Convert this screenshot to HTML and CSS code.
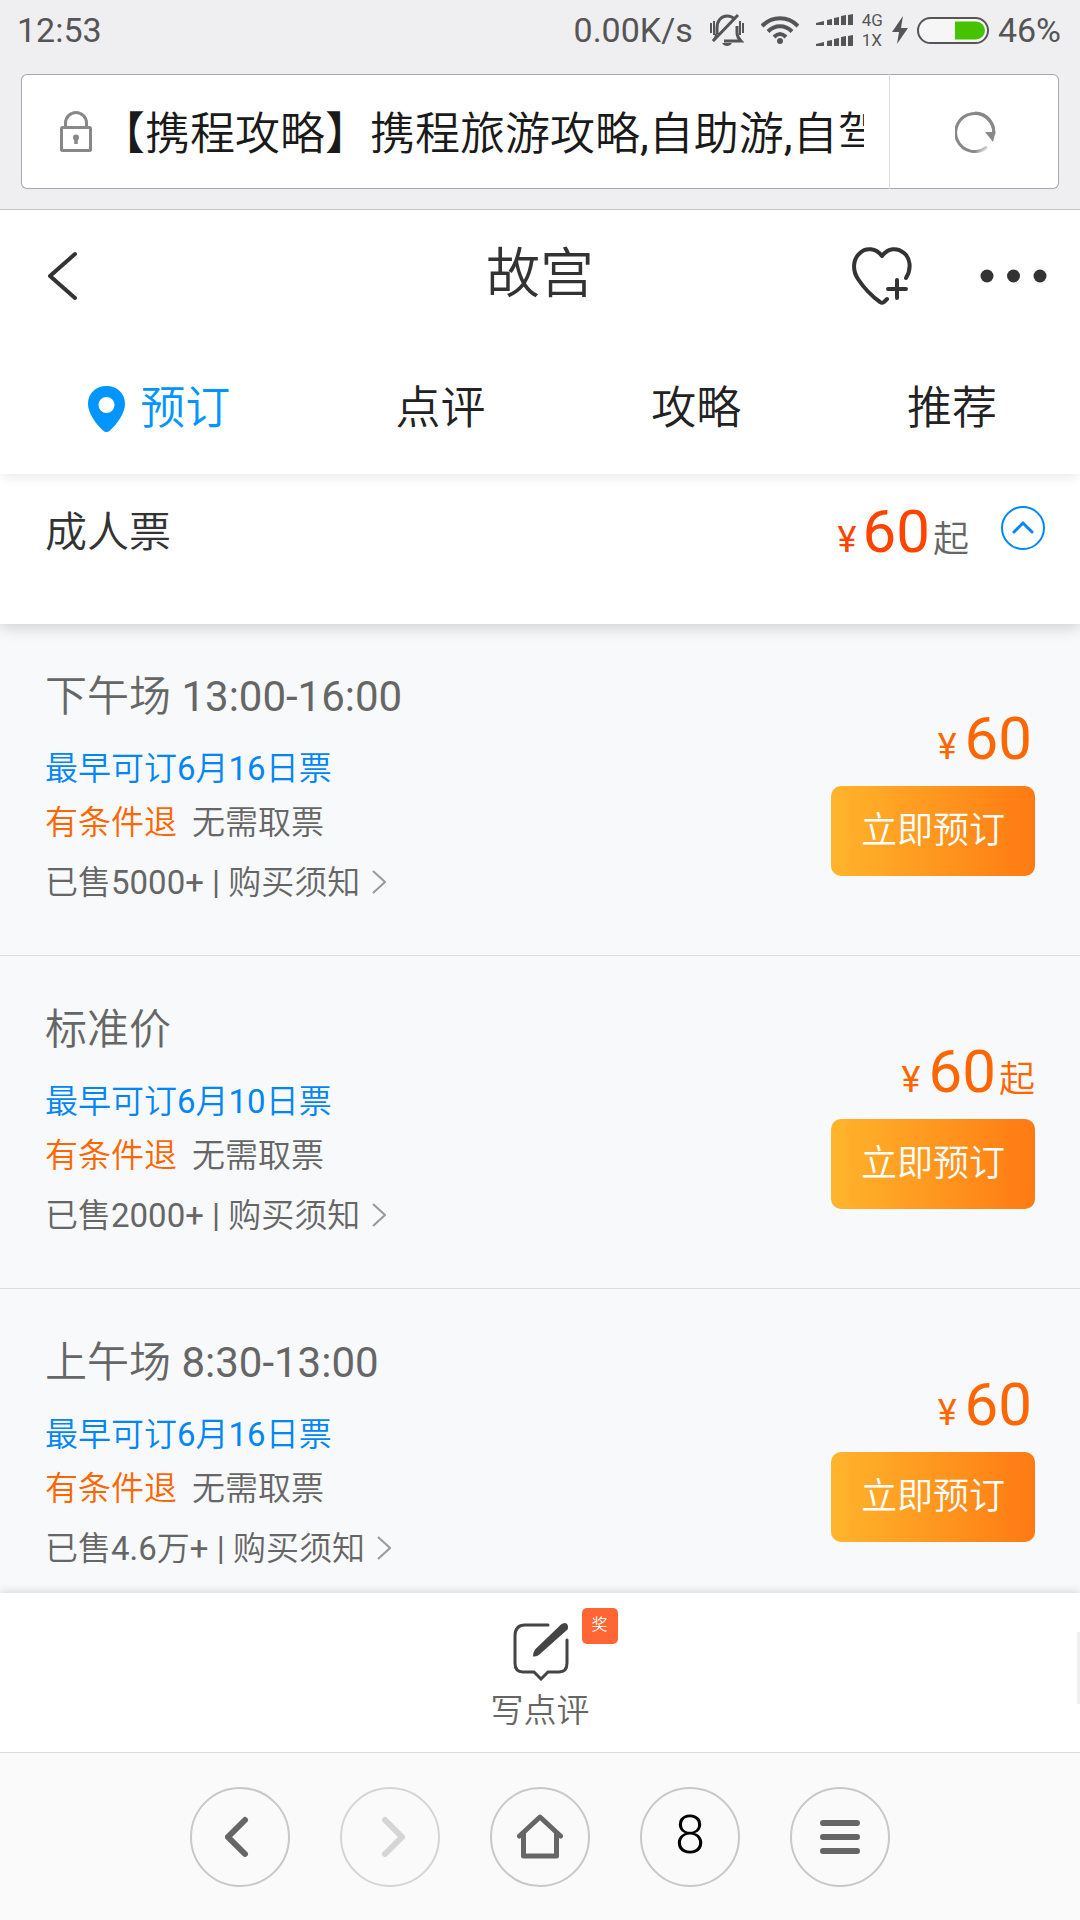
FILE: index.html
```html
<!DOCTYPE html>
<html lang="zh-CN">
<head>
<meta charset="utf-8">
<meta name="viewport" content="width=device-width">
<title>故宫</title>
<link rel="stylesheet" href="styles.css">
</head>
<body>
<div class="status-bar">
  <span class="status-time">12:53</span>
  <span class="status-speed">0.00K/s</span>
  <svg class="icon-bell" width="34" height="32" viewBox="0 0 34 32" fill="none" stroke="#555" stroke-width="3"><path d="M7 20V14C7 7 11 2 17 2c3 0 6 1 8 4M27 12v7c0 3 1 5 4 8H14M3 27L28 1"/><path d="M1 9v10M4 7v14M30 7v14M33 9v10M6 20c0 3-1 5-3 7" stroke-width="2"/><path d="M12 29h10c-2 4-8 4-10 0z" fill="#555" stroke="none"/></svg>
  <svg class="icon-wifi" width="38" height="28" viewBox="0 0 38 28" fill="none" stroke="#555" stroke-width="4"><path d="M1 10C11-.5 27-.5 37 10M7 15.500c7-7 17-7 24 0M13 21c4-4 8-4 12 0"/><circle cx="19" cy="25" r="3" fill="#555" stroke="none"/></svg>
  <svg class="icon-signal" width="37" height="32" viewBox="0 0 37 32" fill="#555"><path id="bars" d="M0 9l8-2v4H0zM11 6l5-1v6h-5zM18 4l5-1v8h-5zM25 2l5-1v10h-5zM32 1l5-1v11h-5z"/><use href="#bars" y="21"/></svg>
  <span class="status-network"><span>4G</span><span>1X</span></span>
  <svg class="icon-bolt" width="16" height="28" viewBox="0 0 16 28" fill="#555"><path d="M11 0L0 16h7L5 28 16 12H9z"/></svg>
  <svg class="icon-battery" width="72" height="27" viewBox="0 0 72 27"><rect x="1" y="1" width="70" height="25" rx="12.500" fill="#f6f6f7" stroke="#555" stroke-width="2"/><path d="M38 4.500h21a9 9 0 0 1 0 18H38z" fill="#47c200"/></svg>
  <span>46%</span>
</div>

<form class="address-bar">
  <label class="address-field">
    <svg width="32" height="41" viewBox="0 0 32 41" fill="none" stroke="#888" stroke-width="3"><path d="M5.500 16V12a10.500 10.500 0 0 1 21 0v4"/><rect x="1.500" y="16.500" width="29" height="23" rx="1"/><path d="M16 26v7" stroke-width="3.500"/><circle cx="16" cy="26.500" r="3" fill="#888" stroke="none"/></svg>
    <input class="address-input" type="text" aria-label="地址栏" value="【携程攻略】携程旅游攻略,自助游,自驾游">
  </label>
  <button class="reload" type="button" aria-label="刷新">
    <svg width="41" height="42" viewBox="0 0 41 42" fill="none"><defs><linearGradient id="fade" x1="0" y1="0" x2="1" y2="1"><stop offset=".75" stop-color="#888"/><stop offset=".92" stop-color="#888" stop-opacity="0"/></linearGradient></defs><path d="M32 36A19 19 0 1 1 38.500 24" stroke="url(#fade)" stroke-width="3"/><path d="M20 2A18.500 19 0 0 1 38.500 24" stroke="#888" stroke-width="3"/><path d="M30 21h10.500L38 31z" fill="#888"/></svg>
  </button>
</form>

<header class="page-header">
  <div class="title-bar">
    <button class="icon-button back" type="button" aria-label="返回"><svg width="32" height="50" viewBox="0 0 32 50" fill="none" stroke="#333" stroke-width="4" stroke-linecap="round" stroke-linejoin="round"><path d="M29 3L4 25 29 47"/></svg></button>
    <h1 class="title">故宫</h1>
    <div class="title-actions">
      <button class="icon-button" type="button" aria-label="收藏"><svg width="60" height="58" viewBox="0 0 60 58" fill="none" stroke="#333" stroke-width="4" stroke-linecap="round" stroke-linejoin="round"><path d="M54 31C60 21 58 11 52 6 45 0 36 1 30 9 24 1 14 0 8 6 1 12 0 23 6 32c6 9 15 18 22 23q2 1.500 4 0l3-3"/><path d="M45 33v18M36 42h18"/></svg></button>
      <button class="icon-button" type="button" aria-label="更多"><svg width="67" height="14" viewBox="0 0 67 14" fill="#333"><circle cx="7" cy="7" r="6.500"/><circle cx="33.500" cy="7" r="6.500"/><circle cx="60" cy="7" r="6.500"/></svg></button>
    </div>
  </div>
  <nav class="tabs">
    <a class="tab tab-active" href="#booking"><svg width="37" height="46" viewBox="0 0 37 46"><path fill="#0095ff" fill-rule="evenodd" d="M18.500 0C8 0 0 7 0 18c0 9 8 20 15 26.500q3.500 3 7 0C29 38 37 27 37 18 37 7 29 0 18.500 0zm0 11a8 8 0 1 1 0 16 8 8 0 0 1 0-16z"/></svg>预订</a>
    <a class="tab" href="#reviews">点评</a>
    <a class="tab" href="#guides">攻略</a>
    <a class="tab" href="#recommend">推荐</a>
  </nav>
</header>

<main class="content" id="booking">
  <section class="ticket-group">
    <h2 class="group-name">成人票</h2>
    <div class="price price-group"><span class="yen">¥</span><span class="amount">60</span><span class="from">起</span></div>
    <button class="icon-button" type="button" aria-label="收起"><svg width="44" height="44" viewBox="0 0 44 44" fill="none" stroke="#0086f6" stroke-width="2"><circle cx="22" cy="22" r="21"/><path d="M13 26l9-9 9 9" stroke-width="3" stroke-linecap="round"/></svg></button>
  </section>

  <ul class="tickets">
    <li class="ticket">
      <div class="ticket-info">
        <h3 class="ticket-name">下午场 13:00-16:00</h3>
        <p class="ticket-date">最早可订6月16日票</p>
        <p class="ticket-tags"><span class="refund">有条件退</span><span>无需取票</span></p>
        <p class="ticket-sold">已售5000+ | <a href="#notice">购买须知<svg class="chevron" viewBox="0 0 14 24"><path d="M1 1l12 11L1 23"/></svg></a></p>
      </div>
      <div class="ticket-buy">
        <div class="price"><span class="yen">¥</span><span class="amount">60</span></div>
        <button class="book" type="button">立即预订</button>
      </div>
    </li>
    <li class="ticket">
      <div class="ticket-info">
        <h3 class="ticket-name">标准价</h3>
        <p class="ticket-date">最早可订6月10日票</p>
        <p class="ticket-tags"><span class="refund">有条件退</span><span>无需取票</span></p>
        <p class="ticket-sold">已售2000+ | <a href="#notice">购买须知<svg class="chevron" viewBox="0 0 14 24"><path d="M1 1l12 11L1 23"/></svg></a></p>
      </div>
      <div class="ticket-buy">
        <div class="price"><span class="yen">¥</span><span class="amount">60</span><span class="from">起</span></div>
        <button class="book" type="button">立即预订</button>
      </div>
    </li>
    <li class="ticket">
      <div class="ticket-info">
        <h3 class="ticket-name">上午场 8:30-13:00</h3>
        <p class="ticket-date">最早可订6月16日票</p>
        <p class="ticket-tags"><span class="refund">有条件退</span><span>无需取票</span></p>
        <p class="ticket-sold">已售4.6万+ | <a href="#notice">购买须知<svg class="chevron" viewBox="0 0 14 24"><path d="M1 1l12 11L1 23"/></svg></a></p>
      </div>
      <div class="ticket-buy">
        <div class="price"><span class="yen">¥</span><span class="amount">60</span></div>
        <button class="book" type="button">立即预订</button>
      </div>
    </li>
  </ul>
</main>

<footer class="review-bar">
  <button class="review" type="button">
    <svg width="58" height="59" viewBox="0 0 58 59" fill="none" stroke="#444" stroke-width="3" stroke-linecap="round"><path d="M37 3H14Q4 3 4 14V41Q4 50 12 50H23l7 7 7-7H48Q56 50 56 41V18"/><path d="M50 2.500q3-2.500 5.500-1 2.500 2.500 1 6L29 32q-3 3-7 2.500 0-4 2-7z" fill="#444" stroke="none"/></svg>
    <span>写点评</span>
    <span class="badge">奖</span>
  </button>
  <span class="scroll-thumb"></span>
</footer>

<nav class="browser-nav">
  <button class="round" type="button" aria-label="后退"><svg width="30" height="44" viewBox="0 0 30 44"><path d="M20 5L3 22l17 17"/></svg></button>
  <button class="round" type="button" aria-label="前进" disabled><svg width="30" height="44" viewBox="0 0 30 44"><path d="M10 5l17 17-17 17"/></svg></button>
  <button class="round" type="button" aria-label="主页"><svg width="46" height="46" viewBox="0 0 46 46"><path class="thin" d="M2.500 22L23 3l20.500 19M6.500 20v22h33V20" stroke-linejoin="round"/></svg></button>
  <button class="round round-count" type="button" aria-label="8 个标签页">8</button>
  <button class="round" type="button" aria-label="菜单"><svg width="40" height="34" viewBox="0 0 40 34"><path d="M3 3h34M3 17h34M3 31h34"/></svg></button>
</nav>
</body>
</html>
```
FILE: styles.css
```css
* {
  box-sizing: border-box;
}

body {
  margin: 0;
  height: 100vh;
  display: flex;
  flex-direction: column;
  overflow: hidden;
  background: #fff;
  color: #666;
  font-family: Roboto, "Noto Sans CJK SC DemiLight", "Noto Sans CJK SC", sans-serif;
  font-size: 33px;
  line-height: 48px;
}

h1, h2, h3, p, ul {
  margin: 0;
  padding: 0;
  font-weight: 400;
  list-style: none;
}

svg {
  display: block;
  flex: none;
}

a {
  color: inherit;
  text-decoration: none;
}

button, input {
  margin: 0;
  padding: 0;
  border: 0;
  background: none;
  color: inherit;
  font: inherit;
}

/* Phone status bar */
.status-bar {
  flex: none;
  display: flex;
  align-items: center;
  height: 60px;
  padding: 0 19px 0 17px;
  gap: 9px;
  background: #efeff1;
  color: #555;
  font-size: 34px;
}

.status-time {
  margin-right: auto;
}

.icon-bell,
.icon-wifi,
.icon-signal {
  margin-left: 8px;
}

.status-network {
  display: flex;
  flex-direction: column;
  font-size: 17px;
  line-height: 20px;
}

/* Browser address bar */
.address-bar {
  flex: none;
  display: flex;
  padding: 14px 21px 20px;
  border-bottom: 1px solid #c8c8c8;
  background: #efeff1;
}

.address-field {
  flex: 1;
  display: flex;
  align-items: center;
  gap: 8px;
  height: 115px;
  padding: 0 25px 0 38px;
  border: 1px solid #a9a9aa;
  border-right-color: #ddd;
  border-radius: 6px 0 0 6px;
  background: #fff;
}

.address-input {
  flex: 1;
  min-width: 0;
  height: 72px;
  padding-bottom: 2px;
  color: #1a1a1a;
  font-size: 45px;
}

.reload {
  display: flex;
  align-items: center;
  justify-content: center;
  width: 169px;
  padding-left: 2px;
  border: 1px solid #a9a9aa;
  border-left: 0;
  border-radius: 0 6px 6px 0;
  background: #fff;
}

/* Page header */
.page-header {
  flex: none;
  position: relative;
  z-index: 1;
  background: #fff;
  box-shadow: 0 6px 10px -2px rgba(0, 0, 0, 0.08);
}

.title-bar {
  display: grid;
  grid-template-columns: 1fr auto 1fr;
  align-items: center;
  height: 132px;
  padding: 0 33px;
}

.icon-button {
  display: flex;
}

.back {
  padding-left: 13px;
}

.title {
  padding-bottom: 2px;
  color: #333;
  font-size: 54px;
  line-height: 72px;
}

.title-actions {
  display: flex;
  align-items: center;
  justify-content: flex-end;
  gap: 68px;
}

.tabs {
  display: grid;
  grid-template-columns: 11fr 9fr 9fr 9fr;
  height: 132px;
}

.tab {
  display: flex;
  align-items: center;
  justify-content: center;
  gap: 15px;
  padding-top: 1px;
  color: #222;
  font-size: 45px;
}

.tab-active {
  padding-left: 6px;
  color: #0095ff;
}

/* Ticket list */
.content {
  flex: 1;
  min-height: 0;
  overflow: hidden;
  background: #f8f9fb;
}

.ticket-group {
  position: relative;
  display: flex;
  align-items: flex-start;
  height: 150px;
  padding: 32px 35px 0 45px;
  background: #fff;
  box-shadow: 0 4px 14px rgba(0, 0, 0, 0.16);
}

.group-name {
  margin-right: auto;
  padding-top: 3px;
  color: #333;
  font-size: 42px;
}

.price {
  display: flex;
  align-items: baseline;
  color: #ff6600;
  font-size: 36px;
}

.yen {
  margin-right: 8px;
}

.amount {
  margin-right: 3px;
  font-size: 60px;
}

.price-group {
  margin-right: 32px;
  padding-top: 2px;
  color: #ff4400;
}

.price-group .yen {
  margin-right: 6px;
}

.price-group .from {
  color: #666;
}

.tickets {
  margin-top: -1px;
}

.ticket {
  display: flex;
  justify-content: space-between;
  height: 333px;
  padding: 47px 45px 0;
  border-bottom: 1px solid #ddd;
}

.ticket-info {
  padding-top: 3px;
}

.ticket-name {
  margin-bottom: 24px;
  font-size: 42px;
}

.ticket-date {
  margin-bottom: 6px;
  color: #0086f6;
}

.ticket-tags {
  display: flex;
  gap: 15px;
  margin-bottom: 12px;
}

.refund {
  color: #ff6600;
}

.chevron {
  display: inline-block;
  width: 14px;
  height: 24px;
  margin-left: 12px;
  fill: none;
  stroke: #999;
  stroke-width: 2px;
}

.ticket-buy {
  display: flex;
  flex-direction: column;
  align-items: flex-end;
  gap: 15px;
  padding-top: 45px;
}

.book {
  width: 204px;
  height: 90px;
  border-radius: 10px;
  background: linear-gradient(90deg, #ffb52c, #ff7a13);
  color: #fff;
  font-size: 36px;
}

/* Review bar */
.review-bar {
  flex: none;
  position: relative;
  display: flex;
  justify-content: center;
  height: 159px;
  background: #fff;
  box-shadow: 0 -2px 8px rgba(0, 0, 0, 0.12);
}

.review {
  position: relative;
  display: flex;
  flex-direction: column;
  align-items: center;
  gap: 6px;
  padding: 29px 0 0;
}

.badge {
  position: absolute;
  top: 15px;
  right: -28px;
  width: 36px;
  height: 36px;
  border-radius: 5px;
  background: #ff6633;
  color: #fff;
  font-size: 16px;
  line-height: 34px;
}

.scroll-thumb {
  position: absolute;
  top: 39px;
  right: 0;
  width: 3px;
  height: 72px;
  background: #f0f0f0;
}

/* Browser navigation */
.browser-nav {
  flex: none;
  position: relative;
  display: flex;
  align-items: center;
  justify-content: center;
  gap: 50px;
  height: 168px;
  border-top: 1px solid #ddd;
  background: #fafafa;
}

.round {
  display: flex;
  align-items: center;
  justify-content: center;
  width: 100px;
  height: 100px;
  border: 2px solid #c8c8c8;
  border-radius: 50%;
  stroke: #666;
  fill: none;
  stroke-width: 6px;
  stroke-linecap: round;
}

.round:disabled {
  border-color: #d5d5d5;
  stroke: #d5d5d5;
}

.thin {
  stroke-width: 5px;
}

.round-count {
  padding-bottom: 3px;
  color: #000;
  font-size: 54px;
  font-weight: 300;
}
```
